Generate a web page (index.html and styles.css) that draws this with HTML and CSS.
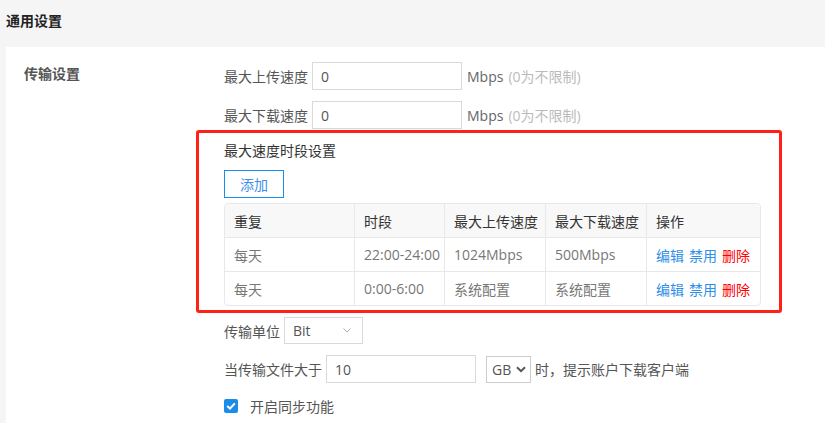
FILE: index.html
```html
<!DOCTYPE HTML>
<html>
    <head>
        <meta http-equiv="Content-Type" content="text/html; charset=UTF-8"/>
        <title>通用设置</title>
        <link rel="stylesheet" href="styles.css">
    </head>
    <body>
        <div class="page-title">通用设置</div>
        <div class="panel">
            <div class="section-label">传输设置</div>
            <div class="section-body">
                <div class="row">
                    <span class="label">最大上传速度</span>
                    <input class="text-input" type="text" value="0">
                    <span class="unit">Mbps</span>
                    <span class="hint">(0为不限制)</span>
                </div>
                <div class="row">
                    <span class="label">最大下载速度</span>
                    <input class="text-input" type="text" value="0">
                    <span class="unit">Mbps</span>
                    <span class="hint">(0为不限制)</span>
                </div>

                <div class="limit-box">
                    <div class="limit-title">最大速度时段设置</div>
                    <button class="btn-add" type="button">添加</button>
                    <div class="table-wrap">
                        <table class="limit-table">
                            <colgroup>
                                <col style="width:130px">
                                <col style="width:90px">
                                <col style="width:101px">
                                <col style="width:101px">
                                <col>
                            </colgroup>
                            <thead>
                                <tr>
                                    <th>重复</th>
                                    <th>时段</th>
                                    <th>最大上传速度</th>
                                    <th>最大下载速度</th>
                                    <th>操作</th>
                                </tr>
                            </thead>
                            <tbody>
                                <tr>
                                    <td>每天</td>
                                    <td>22:00-24:00</td>
                                    <td>1024Mbps</td>
                                    <td>500Mbps</td>
                                    <td class="ops"><a href="#">编辑</a><a href="#">禁用</a><a href="#" class="del">删除</a></td>
                                </tr>
                                <tr>
                                    <td>每天</td>
                                    <td>0:00-6:00</td>
                                    <td>系统配置</td>
                                    <td>系统配置</td>
                                    <td class="ops"><a href="#">编辑</a><a href="#">禁用</a><a href="#" class="del">删除</a></td>
                                </tr>
                            </tbody>
                        </table>
                    </div>
                </div>

                <div class="row row-unit">
                    <span class="label">传输单位</span>
                    <div class="select select-unit">
                        <span>Bit</span>
                        <svg width="8" height="5" viewBox="0 0 8 5"><path d="M0.5 0.5 L4 4 L7.5 0.5" fill="none" stroke="#aaa" stroke-width="1"/></svg>
                    </div>
                </div>
                <div class="row">
                    <span class="label">当传输文件大于</span>
                    <input class="text-input" type="text" value="10">
                    <div class="select select-size">
                        <span>GB</span>
                        <svg width="10" height="7" viewBox="0 0 10 7"><path d="M1 1.2 L5 5.2 L9 1.2" fill="none" stroke="#555" stroke-width="2"/></svg>
                    </div>
                    <span class="tail">时，提示账户下载客户端</span>
                </div>
                <div class="row row-check">
                    <span class="checkbox">
                        <svg width="10" height="8" viewBox="0 0 10 8"><path d="M1.2 4 L4 6.6 L8.8 1.4" fill="none" stroke="#fff" stroke-width="2"/></svg>
                    </span>
                    <span class="check-label">开启同步功能</span>
                </div>
            </div>
        </div>
    </body>
</html>
```

FILE: styles.css
```css
html{
    background-color:#f5f5f5;
}
body{
    margin:0;
    background-color:#f5f5f5;
    font-family:"Open Sans","Noto Sans CJK SC",sans-serif;
    font-size:14px;
    color:#555;
}
.page-title{
    height:47px;
    box-sizing:border-box;
    padding:10px 6px 0;
    line-height:21px;
    font-weight:600;
    color:#222;
}
.panel{
    display:flex;
    margin-left:6px;
    min-height:376px;
    padding-top:15px;
    box-sizing:border-box;
    background:#fff;
}
.section-label{
    width:218px;
    flex:none;
    box-sizing:border-box;
    padding:0 0 0 18px;
    line-height:24px;
    font-weight:600;
    color:#555;
}
.section-body{
    display:flex;
    flex-direction:column;
    align-items:flex-start;
}
.row{
    display:flex;
    align-items:center;
    height:28px;
    margin-bottom:11px;
}
.label{
    margin-right:4px;
    color:#555;
}
.text-input{
    width:150px;
    height:28px;
    box-sizing:border-box;
    border:1px solid #d9d9d9;
    padding:0 8px;
    font:inherit;
    color:#555;
    outline:none;
}
.unit{
    margin-left:5px;
    color:#666;
}
.hint{
    margin-left:5px;
    color:#bbb;
}
.limit-box{
    width:586px;
    box-sizing:border-box;
    margin:-10px 0 4px -28px;
    padding:8px 20px 4px 25px;
    border:3px solid #ff2116;
    border-radius:3px;
}
.limit-title{
    line-height:20px;
    color:#333;
}
.btn-add{
    display:block;
    width:60px;
    height:28px;
    margin-top:9px;
    padding:0;
    border:1px solid #1d8ce8;
    background:#fff;
    color:#3d8fe8;
    font:inherit;
}
.table-wrap{
    width:535px;
    margin-top:5px;
    border:1px solid #e8e8e8;
    border-radius:4px;
    overflow:hidden;
}
.limit-table{
    width:100%;
    table-layout:fixed;
    border-collapse:separate;
    border-spacing:0;
}
.limit-table th,
.limit-table td{
    box-sizing:border-box;
    height:34px;
    padding:0 0 0 9px;
    border-right:1px solid #e8e8e8;
    border-bottom:1px solid #e8e8e8;
    text-align:left;
    white-space:nowrap;
}
.limit-table th:last-child,
.limit-table td:last-child{
    border-right:none;
}
.limit-table tbody tr:last-child td{
    border-bottom:none;
    height:33px;
}
.limit-table th{
    background:#f8f8f8;
    font-weight:normal;
    color:#333;
}
.limit-table td{
    color:#777;
}
.ops a{
    margin-right:5px;
    color:#2f8ee8;
    text-decoration:none;
}
.ops a.del{
    color:#ff0000;
}
.row-unit{
    height:27px;
}
.select{
    display:flex;
    align-items:center;
    justify-content:space-between;
    height:27px;
    box-sizing:border-box;
    border:1px solid #d9d9d9;
    background:#fff;
}
.select-unit{
    width:79px;
    padding:0 11px 0 8px;
    color:#555;
}
.select-size{
    width:45px;
    margin-left:10px;
    padding:0 4px 0 5px;
    border-color:#ccc;
    color:#555;
}
.tail{
    margin-left:4px;
    color:#555;
}
.row-check{
    height:24px;
}
.checkbox{
    display:flex;
    align-items:center;
    justify-content:center;
    width:14px;
    height:14px;
    border-radius:2px;
    background:#1d8ce8;
}
.check-label{
    margin-left:12px;
    color:#555;
}
```
